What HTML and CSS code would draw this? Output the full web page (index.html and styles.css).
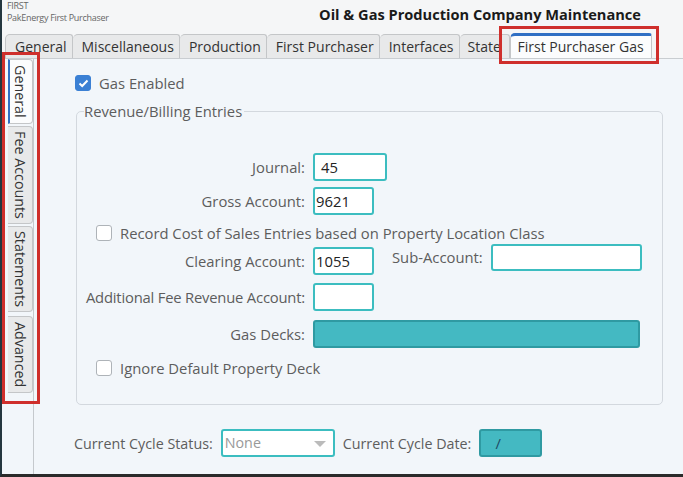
FILE: index.html
```html
<!DOCTYPE html>
<html lang="en">
  <head>
    <meta charset="UTF-8" />
    <title>Oil &amp; Gas Production Company Maintenance</title>
    <link rel="stylesheet" href="styles.css">
  </head>
  <body>
    <div class="app">
      <div class="header">
        <div class="app-name">
          <div>FIRST</div>
          <div>PakEnergy First Purchaser</div>
        </div>
        <div class="title">Oil &amp; Gas Production Company Maintenance</div>
      </div>

      <div class="tabs">
        <div class="tab">General</div>
        <div class="tab">Miscellaneous</div>
        <div class="tab">Production</div>
        <div class="tab">First Purchaser</div>
        <div class="tab">Interfaces</div>
        <div class="tab tab-clipped">State</div>
        <div class="tab active">First Purchaser Gas</div>
      </div>

      <div class="main">
        <div class="side-tabs">
          <div class="side-tab active">General</div>
          <div class="side-tab">Fee Accounts</div>
          <div class="side-tab">Statements</div>
          <div class="side-tab side-last">Advanced</div>
        </div>

        <div class="content">
          <label class="check-row top-check">
            <span class="box checked">
              <svg width="11" height="9" viewBox="0 0 11 9"><path d="M1.5 4.5 L4.2 7 L9.5 1.5" fill="none" stroke="#fff" stroke-width="2"/></svg>
            </span>
            Gas Enabled
          </label>

          <fieldset class="group">
            <legend>Revenue/Billing Entries</legend>

            <div class="row first-row">
              <span class="lbl">Journal:</span>
              <span class="field w74">45</span>
            </div>
            <div class="row gross-row">
              <span class="lbl">Gross Account:</span>
              <span class="field w61 tight">9621</span>
            </div>
            <label class="check-row mid-check">
              <span class="box"></span>
              Record Cost of Sales Entries based on Property Location Class
            </label>
            <div class="row clearing-row">
              <span class="lbl">Clearing Account:</span>
              <span class="field w61 tight">1055</span>
              <span class="lbl-inline">Sub-Account:</span>
              <span class="field w151 raised"></span>
            </div>
            <div class="row">
              <span class="lbl condensed">Additional Fee Revenue Account:</span>
              <span class="field w61"></span>
            </div>
            <div class="row decks-row">
              <span class="lbl">Gas Decks:</span>
              <span class="field filled w327"></span>
            </div>
            <label class="check-row last-check">
              <span class="box"></span>
              Ignore Default Property Deck
            </label>
          </fieldset>

          <div class="status-row">
            <span>Current Cycle Status:</span>
            <span class="field select">None<span class="arrow"></span></span>
            <span>Current Cycle Date:</span>
            <span class="field filled date">/</span>
          </div>
        </div>
      </div>

      <div class="mark mark-tab"></div>
      <div class="mark mark-side"></div>
    </div>
  </body>
</html>
```

FILE: styles.css
```css
body {
  margin: 0;
  font-family: "Open Sans", "Noto Sans", sans-serif;
  color: #5d5d5d;
}
.app {
  position: relative;
  width: 683px;
  height: 477px;
  box-sizing: border-box;
  border-left: 2px solid #24363f;
  border-bottom: 3px solid #2a2a2a;
  background: #f2f6fa;
  display: flex;
  flex-direction: column;
  overflow: hidden;
}
.header {
  height: 33px;
  background: #f5f6f7;
  display: flex;
  justify-content: space-between;
  padding: 0 42px 0 5px;
}
.app-name {
  font-size: 9px;
  line-height: 12px;
  color: #666;
  letter-spacing: -0.3px;
}
.title {
  font-size: 14.6px;
  font-weight: bold;
  color: #1a1a1a;
  padding-top: 4px;
}
.tabs {
  height: 25px;
  background: #f5f6f7;
  display: flex;
  align-items: flex-end;
  padding-left: 3px;
  border-bottom: 1px solid #c9cdd1;
}
.tab {
  height: 24px;
  box-sizing: border-box;
  padding: 0 5px 0 9px;
  font-size: 14px;
  line-height: 23px;
  color: #333;
  background: #e8e9ea;
  border: 1px solid #c4c6c8;
  border-left: none;
  border-bottom: none;
  border-radius: 5px 3px 0 0;
  white-space: nowrap;
}
.tab:first-child {
  border-left: 1px solid #c4c6c8;
}
.tab-clipped {
  width: 50px;
  overflow: hidden;
  padding-left: 8px;
}
.tab.active {
  height: 25px;
  background: #fbfcfd;
  border: 1px solid #c4c6c8;
  border-top: 3px solid #2f6fc4;
  border-bottom: none;
  line-height: 21px;
  padding: 0 7px 0 7px;
}
.main {
  flex: 1;
  display: flex;
}
.side-tabs {
  width: 32px;
  box-sizing: border-box;
  border-right: 1px solid #c5c9cd;
  padding: 0 0 0 6px;
  display: flex;
  flex-direction: column;
  gap: 2px;
}
.side-tab {
  writing-mode: vertical-rl;
  width: 25px;
  box-sizing: border-box;
  font-size: 14.3px;
  line-height: 23px;
  color: #333;
  background: #e8e9ea;
  border: 1px solid #c4c6c8;
  border-left: none;
  border-radius: 0 4px 4px 0;
  padding: 4px 0;
  white-space: nowrap;
}
.side-tab.active {
  background: #fbfcfd;
  border-left: 2px solid #2f6fc4;
  padding: 5px 0;
}
.side-last {
  margin-top: 2px;
  padding: 5px 0;
}
.content {
  flex: 1;
  padding: 14px 0 0 41px;
}
.check-row {
  display: flex;
  align-items: center;
  gap: 8px;
  font-size: 14.8px;
  height: 20px;
  white-space: nowrap;
}
.box {
  width: 14px;
  height: 14px;
  border: 1px solid #aeb3b8;
  border-radius: 3px;
  background: #fff;
  display: flex;
  align-items: center;
  justify-content: center;
}
.box.checked {
  background: #3b80d4;
  border-color: #3b80d4;
}
.group {
  margin: 8px 0 0 1px;
  width: 587px;
  height: 304px;
  box-sizing: border-box;
  border: 1px solid #d3d8de;
  border-radius: 5px;
  padding: 0 0 0 9px;
}
legend {
  font-size: 14.8px;
  padding: 0 2px 0 0;
  margin-left: -2px;
}
.row {
  display: flex;
  align-items: center;
  height: 28px;
  margin-top: 8px;
  font-size: 14.8px;
}
.first-row {
  margin-top: 32px;
}
.gross-row {
  margin-top: 6px;
}
.clearing-row {
  margin-top: 4px;
}
.decks-row {
  margin-top: 9px;
}
.lbl {
  width: 219px;
  flex-shrink: 0;
  display: flex;
  justify-content: flex-end;
  white-space: nowrap;
  margin-right: 8px;
}
.condensed {
  letter-spacing: -0.2px;
}
.lbl-inline {
  margin: 0 8px 0 18px;
  position: relative;
  top: -4px;
}
.field {
  height: 28px;
  box-sizing: border-box;
  border: 2px solid #3cbdc0;
  border-radius: 3px;
  background: #fff;
  color: #222;
  padding-left: 6px;
  line-height: 24px;
  font-size: 14.8px;
}
.tight {
  padding-left: 1px;
}
.raised {
  height: 27px;
  position: relative;
  top: -4px;
}
.w74 { width: 74px; }
.w61 { width: 61px; }
.w151 { width: 151px; }
.w327 { width: 327px; }
.filled {
  background: #44b9c2;
  border-color: #2f9aa2;
}
.mid-check {
  margin: 8px 0 0 10px;
}
.last-check {
  margin: 10px 0 0 10px;
}
.status-row {
  display: flex;
  align-items: center;
  gap: 8px;
  margin: 24px 0 0 -1px;
  font-size: 14.3px;
}
.select {
  position: relative;
  width: 114px;
  padding-left: 2px;
  font-size: 14.3px;
  color: #999;
}
.arrow {
  position: absolute;
  right: 7px;
  top: 10px;
  border-left: 6px solid transparent;
  border-right: 6px solid transparent;
  border-top: 6px solid #bbb;
}
.date {
  width: 63px;
  padding-left: 14px;
  color: #1d4a66;
}
.mark {
  position: absolute;
  border: 3px solid #cf2f2c;
}
.mark-tab {
  left: 497px;
  top: 26px;
  width: 154px;
  height: 32px;
}
.mark-side {
  left: 0;
  top: 52px;
  width: 32px;
  height: 346px;
}
```
